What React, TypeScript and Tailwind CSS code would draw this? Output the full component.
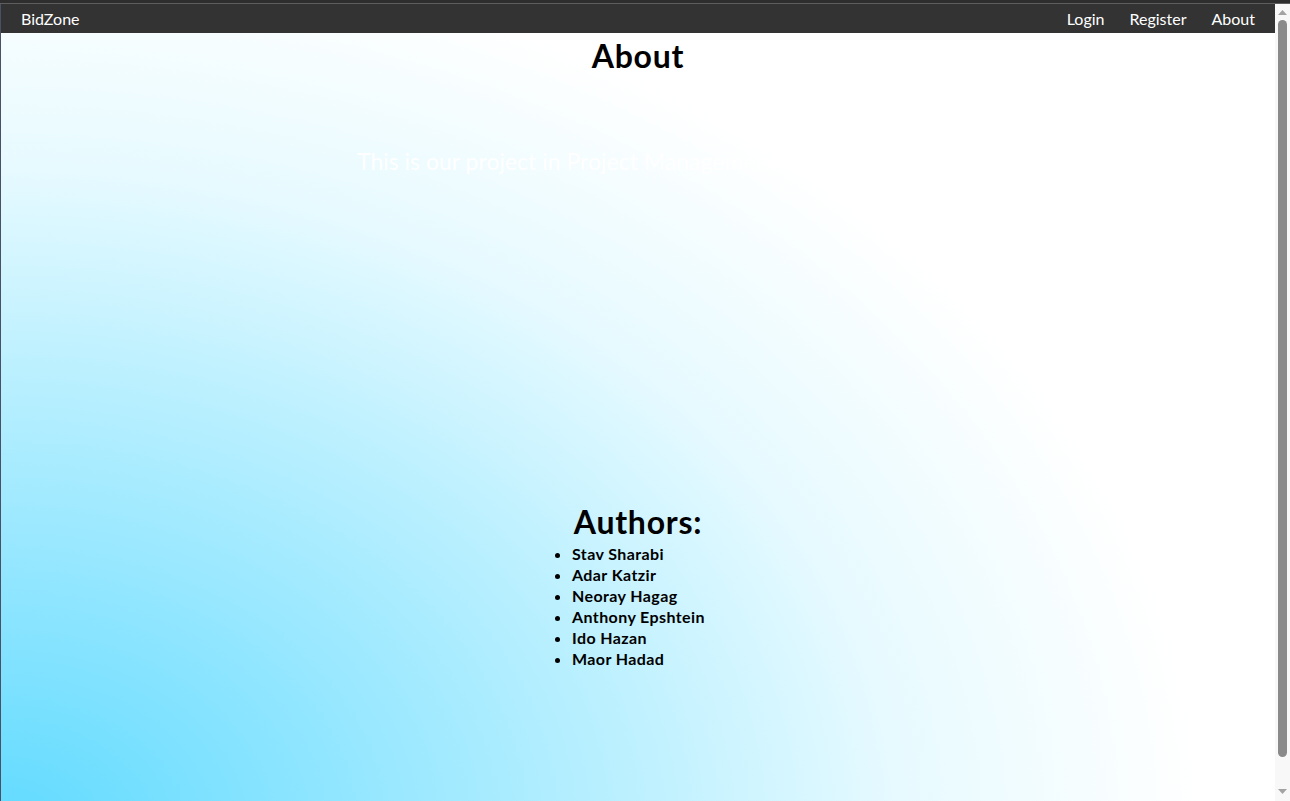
import React from "react";

const authors = [
  "Stav Sharabi",
  "Adar Katzir",
  "Neoray Hagag",
  "Anthony Epshtein",
  "Ido Hazan",
  "Maor Hadad",
];

export default function App() {
  return (
    <div
      className="flex h-[801px] w-[1290px] flex-col overflow-hidden bg-[#2e2e2e]"
      style={{ fontFamily: "Lato, 'Noto Sans', sans-serif" }}
    >
      <div className="h-[3px] bg-[#2e2e2e]" />
      <div className="h-px bg-[#5e5e5e]" />
      <div className="flex min-h-0 flex-1">
        <div className="w-px bg-[#4a5166]" />
        <div className="flex min-w-0 flex-1 flex-col">
          <nav className="flex h-[29px] items-center justify-between bg-[#333333] pl-[20px] pr-[20px] text-[16px] text-white">
            <span>BidZone</span>
            <div className="flex items-center gap-[25px]">
              <span>Login</span>
              <span>Register</span>
              <span>About</span>
            </div>
          </nav>
          <main className="flex min-h-0 flex-1 flex-col overflow-hidden bg-[radial-gradient(1201px_891px_at_0px_801px,#5fdaff_0%,#b7efff_50%,#e7faff_75%,#ffffff_100%)] text-black">
            <h1 className="mt-[7px] text-center text-[32px] font-bold leading-none tracking-[0.8px]">About</h1>
            <p className="mx-auto mt-[78px] w-[562px] whitespace-nowrap text-left text-[23px] leading-none text-white">
              This is our project in Project Management course
            </p>
            <h2 className="mt-[333px] text-center text-[32px] font-bold leading-none tracking-[0.75px]">Authors:</h2>
            <ul className="mx-auto mt-[5px] w-[212px] list-disc pl-[40px] text-[16px] font-bold leading-[21px] tracking-[0.4px]">
              {authors.map((a) => (
                <li key={a}>{a}</li>
              ))}
            </ul>
          </main>
        </div>
        <div className="flex w-[15px] flex-col items-center bg-[#f8f8f8]">
          <svg width="9" height="6" viewBox="0 0 9 6" className="mt-[6px]">
            <polygon points="4.5,0 9,5 0,5" fill="#a3a3a3" />
          </svg>
          <div className="mt-[4px] w-[9px] flex-1 rounded-full bg-[#8a8a8a]" />
          <div className="h-[32px] shrink-0" />
          <svg width="9" height="6" viewBox="0 0 9 6" className="mb-[6px]">
            <polygon points="0,0 9,0 4.5,5" fill="#a3a3a3" />
          </svg>
        </div>
      </div>
    </div>
  );
}
